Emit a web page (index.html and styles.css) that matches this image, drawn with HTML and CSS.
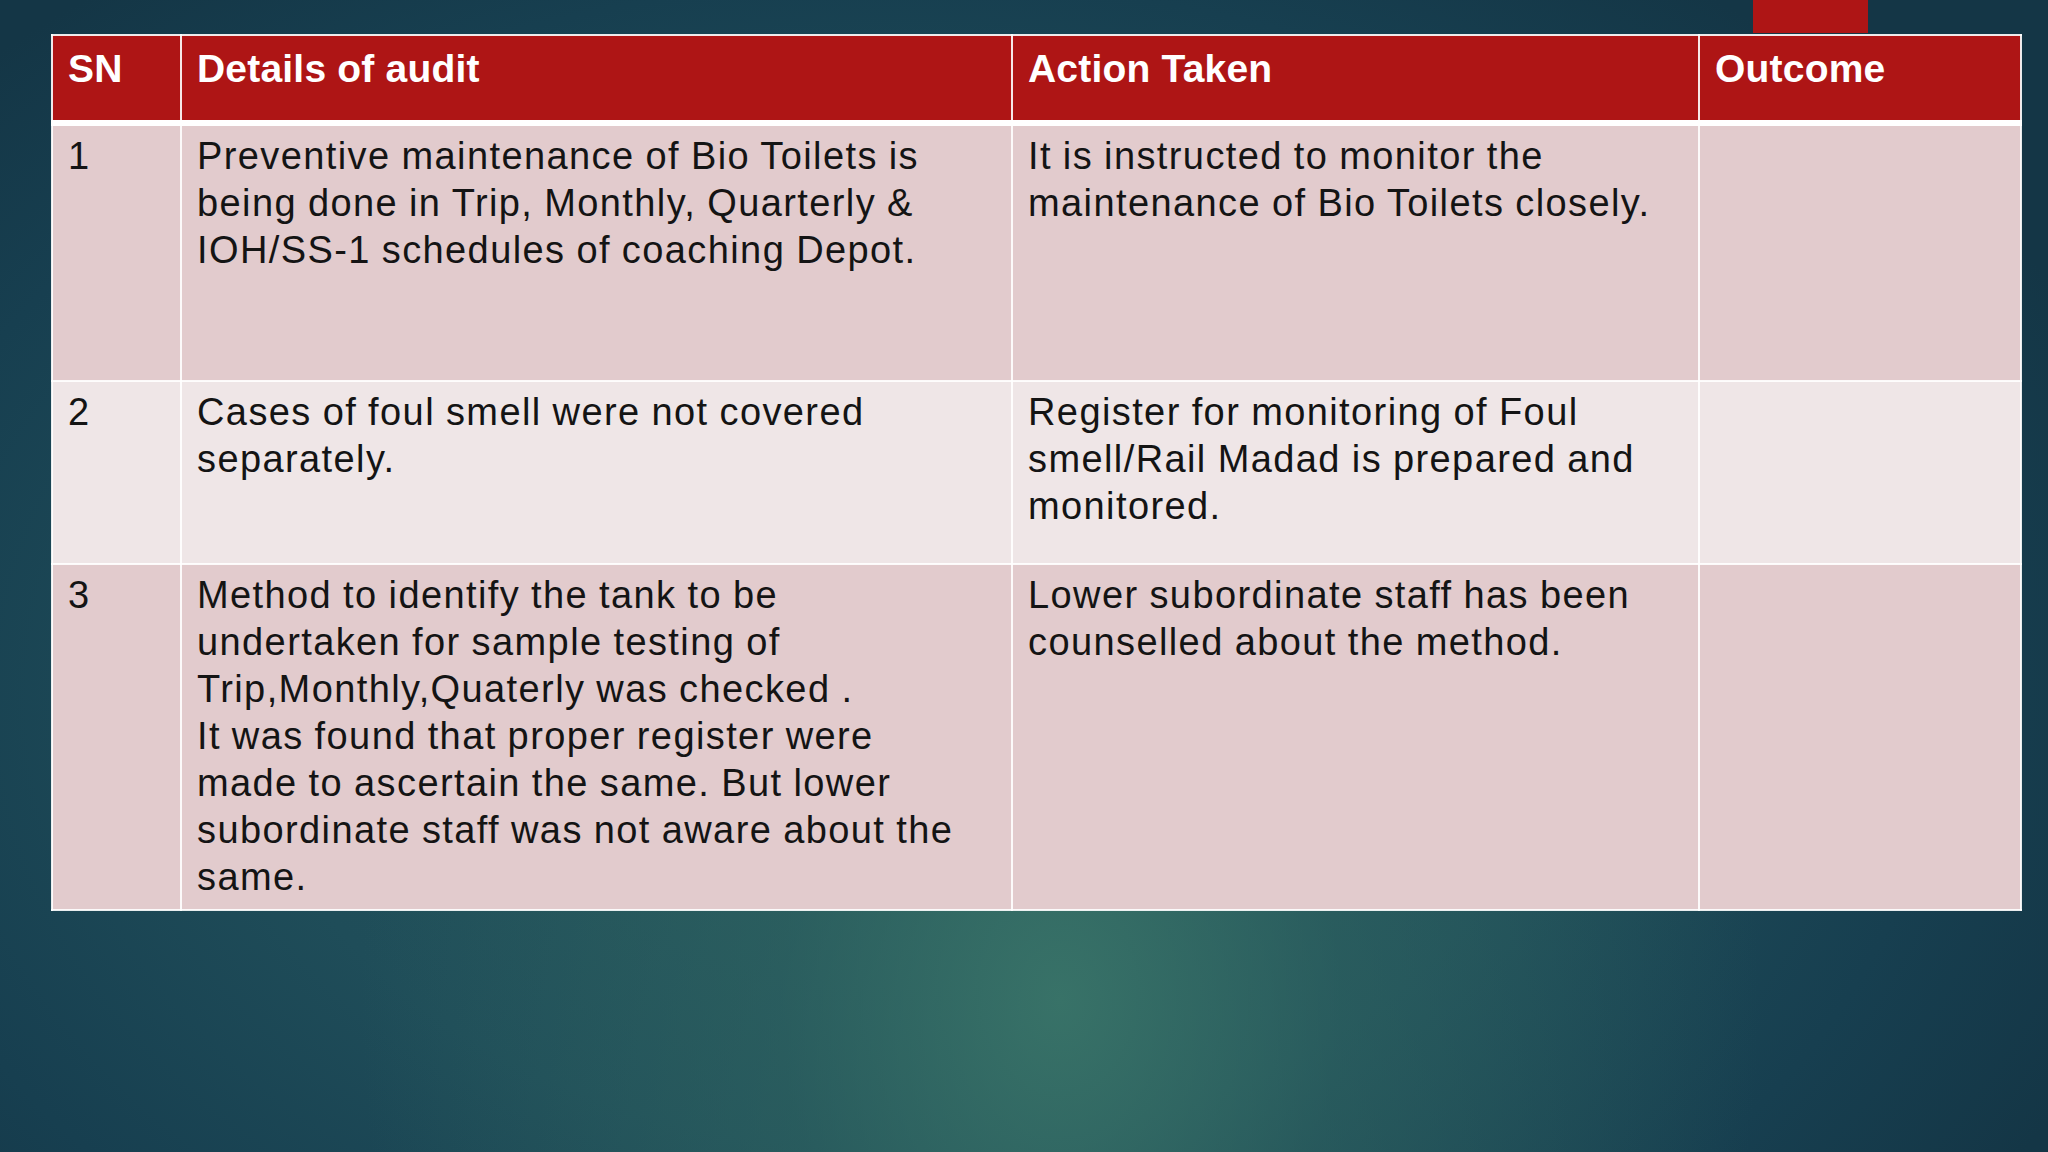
FILE: index.html
```html
<!DOCTYPE html>
<html>
<head>
<meta charset="utf-8">
<link rel="stylesheet" href="styles.css">
</head>
<body>
<div class="slide">
  <div class="topbar"><div class="tab"></div></div>
  <table class="audit">
    <colgroup>
      <col class="c-sn"><col class="c-det"><col class="c-act"><col class="c-out">
    </colgroup>
    <thead>
      <tr class="head">
        <th>SN</th>
        <th>Details of audit</th>
        <th>Action Taken</th>
        <th>Outcome</th>
      </tr>
    </thead>
    <tbody>
      <tr class="r1 odd">
        <td>1</td>
        <td>Preventive maintenance of Bio Toilets is<br>being done in Trip, Monthly, Quarterly &amp;<br>IOH/SS-1 schedules of coaching Depot.</td>
        <td>It is instructed to monitor the<br>maintenance of Bio Toilets closely.</td>
        <td></td>
      </tr>
      <tr class="r2 even">
        <td>2</td>
        <td>Cases of foul smell were not covered<br>separately.</td>
        <td>Register for monitoring of Foul<br>smell/Rail Madad is prepared and<br>monitored.</td>
        <td></td>
      </tr>
      <tr class="r3 odd">
        <td>3</td>
        <td>Method to identify the tank to be<br>undertaken for sample testing of<br>Trip,Monthly,Quaterly was checked .<br>It was found that proper register were<br>made to ascertain the same. But lower<br>subordinate staff was not aware about the<br>same.</td>
        <td>Lower subordinate staff has been<br>counselled about the method.</td>
        <td></td>
      </tr>
    </tbody>
  </table>
</div>
</body>
</html>
```

FILE: styles.css
```css
html, body {
  margin: 0;
  padding: 0;
  width: 2048px;
  height: 1152px;
  overflow: hidden;
}
body {
  background:
    radial-gradient(ellipse 700px 900px at 1060px 1000px, rgba(60,120,106,0.85) 0%, rgba(50,105,98,0.5) 40%, rgba(40,90,95,0) 100%),
    radial-gradient(ellipse 1300px 900px at 900px 700px, #27585e 0%, #1f4d59 50%, #173f50 80%, #143646 100%),
    #143646;
  font-family: "Liberation Sans", Arial, sans-serif;
}
.slide {
  display: flex;
  flex-direction: column;
  padding: 0 28px 0 51px;
  width: 1969px;
}
.topbar {
  display: flex;
  justify-content: flex-end;
  height: 33px;
  margin-bottom: 1px;
}
.tab {
  width: 115px;
  height: 33px;
  background: #ae1515;
  margin-right: 152px;
}
.audit {
  width: 1969px;
  border-collapse: collapse;
  table-layout: fixed;
  border: 2px solid #f4f0f0;
}
.c-sn { width: 129px; }
.c-det { width: 831px; }
.c-act { width: 687px; }
.c-out { width: 322px; }

.audit th, .audit td {
  border: 2px solid rgba(255,255,255,0.9);
  text-align: left;
  vertical-align: top;
  padding: 7px 14px 0 15px;
}
.audit th {
  background: #ae1515;
  color: #ffffff;
  font-weight: bold;
  font-size: 39px;
  line-height: 47px;
  padding-top: 9px;
  height: 88px;
  box-sizing: border-box;
  border-bottom: 6px solid #ffffff;
  letter-spacing: 0.2px;
}
.audit td {
  font-size: 38px;
  line-height: 47px;
  color: #141414;
  letter-spacing: 1.4px;
  word-spacing: -1px;
  white-space: nowrap;
}
.odd td { background: #e2cbcd; }
.even td { background: #efe6e7; }
.r1 td { height: 247px; }
.r2 td { height: 174px; }
.r3 td { height: 337px; }
```
